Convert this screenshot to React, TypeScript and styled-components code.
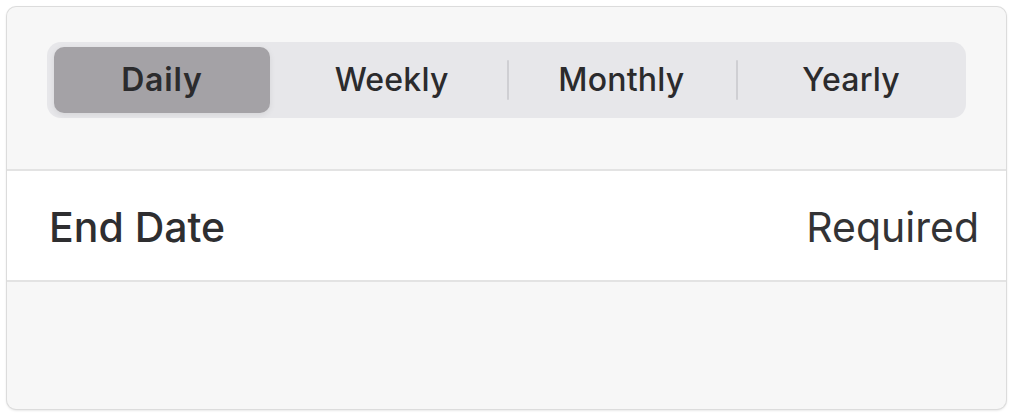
import React, { useState } from 'react';
import styled, { createGlobalStyle } from 'styled-components';

const GlobalStyle = createGlobalStyle`
  html, body {
    margin: 0;
    padding: 0;
    background: #ffffff;
    font-family: Inter, "Liberation Sans", sans-serif;
    -webkit-font-smoothing: antialiased;
  }
`;

const options = ['Daily', 'Weekly', 'Monthly', 'Yearly'];

const App: React.FC = () => {
  const [selected, setSelected] = useState(0);

  return (
    <>
      <GlobalStyle />
      <Page>
        <Card>
          <Header>
            <Segmented>
              {options.map((label, i) => (
                <Segment
                  key={label}
                  $divider={i > 0 && i !== selected && i - 1 !== selected}
                  onClick={() => setSelected(i)}
                >
                  <SegmentLabel $active={i === selected}>{label}</SegmentLabel>
                </Segment>
              ))}
            </Segmented>
          </Header>
          <Row>
            <RowLabel>End Date</RowLabel>
            <RowValue>Required</RowValue>
          </Row>
          <Footer />
        </Card>
      </Page>
    </>
  );
};

const Page = styled.div`
  padding: 7px 8px 8px 7px;
  height: 417px;
  box-sizing: border-box;
`;

const Card = styled.div`
  height: 402px;
  display: flex;
  flex-direction: column;
  background: #f7f7f7;
  border-radius: 9px;
  box-shadow: 0 0 0 1px #dcdcdc, 0 1px 3px rgba(0, 0, 0, 0.18);
  overflow: hidden;
`;

const Header = styled.div`
  padding: 35px 40px 0 40px;
  height: 164px;
  box-sizing: border-box;
  border-bottom: 2px solid #e3e3e3;
`;

const Segmented = styled.div`
  display: grid;
  grid-template-columns: repeat(4, 1fr);
  height: 76px;
  background: #e7e7ea;
  border-radius: 14px;
`;

const Segment = styled.button<{ $divider: boolean }>`
  position: relative;
  display: flex;
  align-items: center;
  justify-content: center;
  border: none;
  background: transparent;
  padding: 5px 7px;
  cursor: pointer;
  font: inherit;

  &::before {
    content: '';
    position: absolute;
    left: 0;
    top: 18px;
    bottom: 18px;
    width: 2px;
    border-radius: 1px;
    background: ${p => (p.$divider ? '#cfcfd3' : 'transparent')};
  }
`;

const SegmentLabel = styled.span<{ $active: boolean }>`
  flex: 1;
  align-self: stretch;
  display: flex;
  align-items: center;
  justify-content: center;
  border-radius: 10px;
  font-size: 32px;
  font-weight: ${p => (p.$active ? 600 : 500)};
  color: #2b2b2d;
  letter-spacing: ${p => (p.$active ? '0.8px' : '0.2px')};
  background: ${p => (p.$active ? '#a4a2a6' : 'transparent')};
  box-shadow: ${p => (p.$active ? '0 2px 6px rgba(0, 0, 0, 0.08)' : 'none')};
  padding-bottom: 2px;
`;

const Row = styled.div`
  display: flex;
  align-items: center;
  justify-content: space-between;
  height: 111px;
  padding: 3px 27px 0 42px;
  box-sizing: border-box;
  background: #ffffff;
  border-bottom: 2px solid #e3e3e3;
`;

const RowLabel = styled.span`
  font-size: 41px;
  font-weight: 500;
  color: #2e2e30;
`;

const RowValue = styled.span`
  font-size: 41px;
  font-weight: 400;
  color: #333335;
`;

const Footer = styled.div`
  flex: 1;
`;

export default App;
